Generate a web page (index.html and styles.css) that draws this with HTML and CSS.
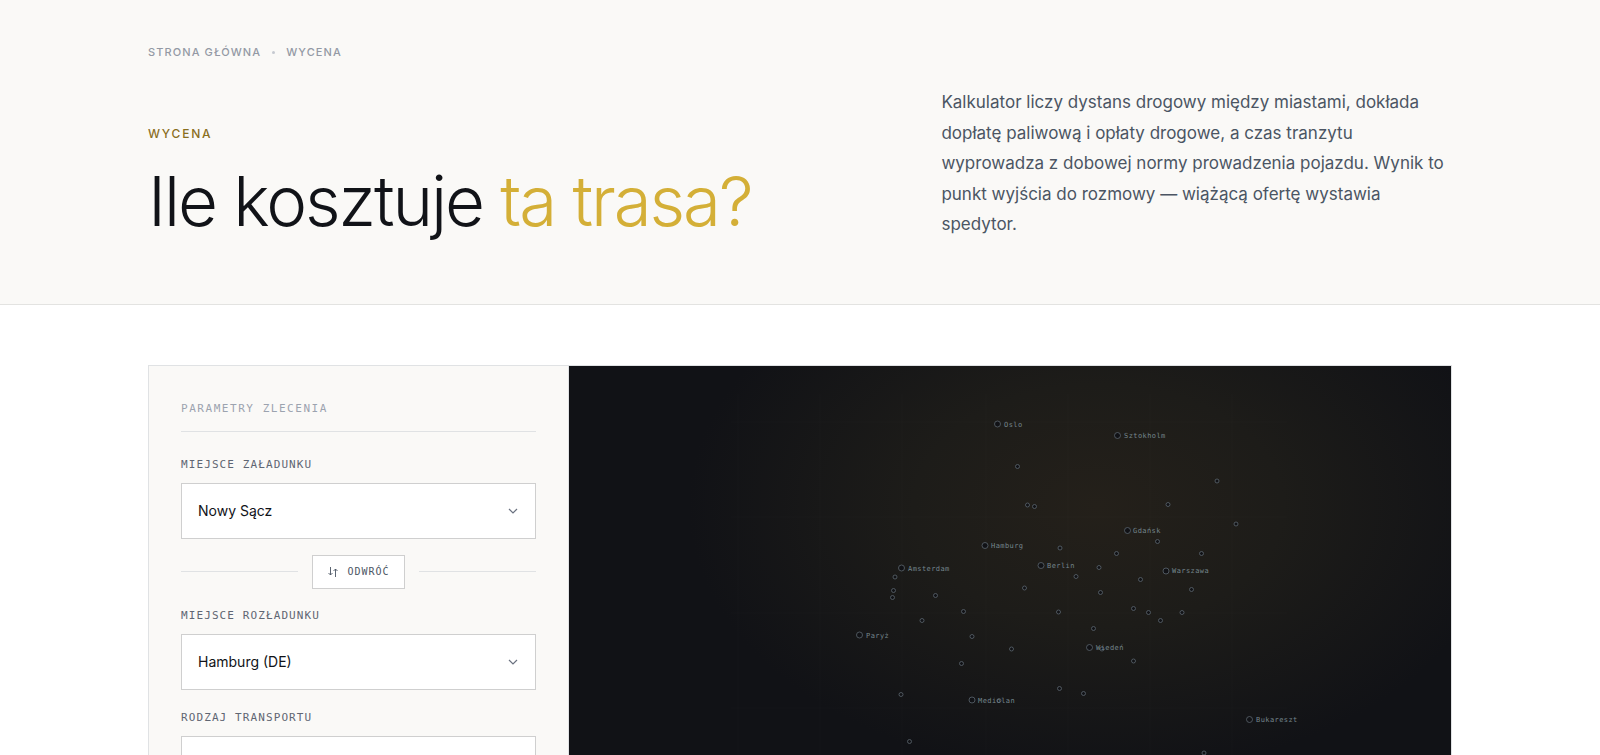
FILE: index.html
```html
<!DOCTYPE html>
<html lang="pl">

<head>
    <meta charset="UTF-8">
    <meta name="viewport" content="width=device-width, initial-scale=1">
    <title>Wycena</title>
    <link rel="stylesheet" href="styles.css">
</head>

<body>
    <header class="hero">
        <div class="container">
            <nav class="breadcrumbs">
                <a href="#">Strona główna</a>
                <span class="breadcrumbs-dot"></span>
                <a href="#">Wycena</a>
            </nav>
            <div class="hero-grid">
                <div>
                    <p class="eyebrow">Wycena</p>
                    <h1 class="hero-title">Ile kosztuje <span class="accent">ta trasa?</span></h1>
                </div>
                <p class="lead">Kalkulator liczy dystans drogowy między miastami, dokłada dopłatę paliwową i opłaty drogowe, a czas tranzytu wyprowadza z dobowej normy prowadzenia pojazdu. Wynik to punkt wyjścia do rozmowy — wiążącą ofertę wystawia spedytor.</p>
            </div>
        </div>
    </header>

    <main class="container">
        <div class="calculator">
            <form class="params">
                <h2 class="params-title">Parametry zlecenia</h2>

                <div class="field">
                    <label for="from">Miejsce załadunku</label>
                    <div class="select">
                        <select id="from">
                            <option>Nowy Sącz</option>
                        </select>
                        <svg class="chevron" viewBox="0 0 10 6"><path d="M1 1l4 4 4-4"/></svg>
                    </div>
                </div>

                <div class="swap">
                    <button type="button">
                        <svg class="swap-icon" viewBox="0 0 12 12"><path d="M3.5 1v8M1.5 7l2 2 2-2M8.500 11V3M6.500 5l2-2 2 2"/></svg>
                        Odwróć
                    </button>
                </div>

                <div class="field">
                    <label for="to">Miejsce rozładunku</label>
                    <div class="select">
                        <select id="to">
                            <option>Hamburg (DE)</option>
                        </select>
                        <svg class="chevron" viewBox="0 0 10 6"><path d="M1 1l4 4 4-4"/></svg>
                    </div>
                </div>

                <div class="field">
                    <label for="type">Rodzaj transportu</label>
                    <div class="select">
                        <select id="type"></select>
                        <svg class="chevron" viewBox="0 0 10 6"><path d="M1 1l4 4 4-4"/></svg>
                    </div>
                </div>
            </form>

            <div class="map">
                <svg viewBox="0 0 882 460">
                    <g class="map-grid">
                        <path d="M169 28V460M251 28V460M333 28V460M417 28V460M499 28V460M581 28V460M663 28V460"/>
                        <path d="M162 56H718M162 151H718M162 247H718M162 342H718"/>
                    </g>
                    <g class="towns">
                        <circle cx="448.5" cy="100.5" r="2"/>
                        <circle cx="458.5" cy="139" r="2"/>
                        <circle cx="465.5" cy="140.5" r="2"/>
                        <circle cx="491" cy="182" r="2"/>
                        <circle cx="547.5" cy="187.5" r="2"/>
                        <circle cx="530" cy="201.5" r="2"/>
                        <circle cx="507" cy="210.5" r="2"/>
                        <circle cx="326" cy="211" r="2"/>
                        <circle cx="648" cy="115" r="2"/>
                        <circle cx="599" cy="138.5" r="2"/>
                        <circle cx="667" cy="158" r="2"/>
                        <circle cx="588.5" cy="175.5" r="2"/>
                        <circle cx="632.5" cy="187.5" r="2"/>
                        <circle cx="324.5" cy="224.5" r="2"/>
                        <circle cx="323.5" cy="231.5" r="2"/>
                        <circle cx="366.5" cy="229.5" r="2"/>
                        <circle cx="394.5" cy="245.5" r="2"/>
                        <circle cx="353" cy="254.5" r="2"/>
                        <circle cx="403" cy="270.5" r="2"/>
                        <circle cx="442.5" cy="283" r="2"/>
                        <circle cx="392.5" cy="297.5" r="2"/>
                        <circle cx="455.5" cy="222" r="2"/>
                        <circle cx="531.5" cy="226.5" r="2"/>
                        <circle cx="489.5" cy="246" r="2"/>
                        <circle cx="564.5" cy="242.5" r="2"/>
                        <circle cx="524.5" cy="262.5" r="2"/>
                        <circle cx="564.5" cy="295" r="2"/>
                        <circle cx="490.5" cy="322.5" r="2"/>
                        <circle cx="514.5" cy="327.5" r="2"/>
                        <circle cx="332" cy="328.5" r="2"/>
                        <circle cx="340.5" cy="375.5" r="2"/>
                        <circle cx="571.5" cy="213.5" r="2"/>
                        <circle cx="622.5" cy="223.5" r="2"/>
                        <circle cx="579.5" cy="246.5" r="2"/>
                        <circle cx="613" cy="246.5" r="2"/>
                        <circle cx="591.5" cy="254.5" r="2"/>
                        <circle cx="635" cy="387" r="2"/>
                        <circle cx="533" cy="283" r="2"/>
                        <circle cx="430" cy="334.5" r="2"/>
                    </g>
                    <g class="cities">
                        <circle cx="428.5" cy="58" r="3"/>
                        <circle cx="548.5" cy="69.5" r="3"/>
                        <circle cx="558.5" cy="164.5" r="3"/>
                        <circle cx="416" cy="179.5" r="3"/>
                        <circle cx="472" cy="199.5" r="3"/>
                        <circle cx="332.5" cy="202" r="3"/>
                        <circle cx="597" cy="205" r="3"/>
                        <circle cx="290.5" cy="269" r="3"/>
                        <circle cx="520.5" cy="281.5" r="3"/>
                        <circle cx="403" cy="334" r="3"/>
                        <circle cx="680.5" cy="353.5" r="3"/>
                    </g>
                    <g class="city-names">
                        <text x="435" y="61">Oslo</text>
                        <text x="555" y="72">Sztokholm</text>
                        <text x="564" y="167">Gdańsk</text>
                        <text x="422" y="182">Hamburg</text>
                        <text x="478" y="202">Berlin</text>
                        <text x="339" y="205">Amsterdam</text>
                        <text x="603" y="207">Warszawa</text>
                        <text x="297" y="272">Paryż</text>
                        <text x="527" y="284">Wiedeń</text>
                        <text x="409" y="337">Mediolan</text>
                        <text x="687" y="356">Bukareszt</text>
                    </g>
                </svg>
            </div>
        </div>
    </main>
</body>

</html>
```
FILE: styles.css
```css
* {
    box-sizing: border-box;
}

body {
    margin: 0;
    font-family: Inter, "Liberation Sans", sans-serif;
    color: #111318;
    background: #ffffff;
}

h1,
h2,
p {
    margin: 0;
}

.container {
    max-width: 1400px;
    margin: 0 auto;
    padding: 0 48px;
}

.hero {
    padding: 44px 0 64px;
    background: #faf9f7;
    border-bottom: 1px solid #e3e3e1;
}

.breadcrumbs {
    display: flex;
    align-items: center;
    gap: 11px;
    margin-bottom: 27px;
    font-size: 11px;
    line-height: 16px;
    font-weight: 500;
    letter-spacing: 0.1em;
    text-transform: uppercase;
}

.breadcrumbs a {
    color: #9499a5;
    text-decoration: none;
}

.breadcrumbs-dot {
    width: 3px;
    height: 3px;
    border-radius: 50%;
    background: #c5c9d0;
}

.hero-grid {
    display: grid;
    grid-template-columns: 1fr 0.7fr;
    gap: 64px;
    align-items: end;
}

.eyebrow {
    margin-bottom: 20px;
    font-size: 12px;
    line-height: 16px;
    font-weight: 500;
    letter-spacing: 0.15em;
    text-transform: uppercase;
    color: #8a6f1e;
}

.hero-title {
    font-size: 69px;
    line-height: 78px;
    font-weight: 300;
    letter-spacing: -0.03em;
}

.accent {
    color: #d4af37;
}

.lead {
    font-size: 17px;
    line-height: 1.8;
    color: #4b5563;
}

.calculator {
    display: grid;
    grid-template-columns: 420px 1fr;
    margin-top: 60px;
    border: 1px solid #e0e2e4;
}

.params {
    padding: 32px;
    background: #faf9f7;
    border-right: 1px solid #e0e2e4;
}

.params-title {
    margin-bottom: 25px;
    padding-bottom: 11px;
    border-bottom: 1px solid #e0e2e4;
    font-family: "DejaVu Sans Mono", monospace;
    font-size: 11px;
    line-height: 22px;
    font-weight: 400;
    letter-spacing: 0.14em;
    text-transform: uppercase;
    color: #9ca3af;
}

.field {
    margin-bottom: 20px;
}

.field label {
    display: block;
    margin-bottom: 10px;
    font-family: "DejaVu Sans Mono", monospace;
    font-size: 11px;
    line-height: 16px;
    letter-spacing: 0.1em;
    text-transform: uppercase;
    color: #5f6673;
}

.select {
    position: relative;
}

.select select {
    display: block;
    width: 100%;
    height: 56px;
    padding: 0 40px 0 16px;
    border: 1px solid #cfcfcf;
    border-radius: 0;
    background: #ffffff;
    font-family: inherit;
    font-size: 14px;
    color: #111318;
    appearance: none;
}

.chevron {
    position: absolute;
    top: 25px;
    right: 18px;
    width: 10px;
    height: 6px;
    fill: none;
    stroke: #6b7280;
    stroke-width: 1.2;
    pointer-events: none;
}

.swap {
    display: flex;
    align-items: center;
    gap: 14px;
    margin: -4px 0 19px;
}

.swap::before,
.swap::after {
    content: "";
    flex: 1;
    height: 1px;
    background: #e0e2e4;
}

.swap button {
    display: flex;
    align-items: center;
    gap: 8px;
    height: 34px;
    padding: 0 14px;
    border: 1px solid #cfcfcf;
    background: #ffffff;
    font-family: "DejaVu Sans Mono", monospace;
    font-size: 10px;
    letter-spacing: 0.1em;
    text-transform: uppercase;
    color: #4b5563;
    cursor: pointer;
}

.swap-icon {
    width: 12px;
    height: 12px;
    fill: none;
    stroke: #4b5563;
    stroke-width: 0.9;
}

.map {
    background: radial-gradient(ellipse 410px 270px at 60% 140px, #24201a, #1d1c19 45%, #111216);
}

.map svg {
    display: block;
    width: 100%;
}

.map-grid {
    fill: none;
    stroke: #ffffff;
    stroke-opacity: 0.018;
}

.towns circle,
.cities circle {
    fill: #111216;
    stroke: #5c666e;
    stroke-width: 0.8;
}

.city-names {
    font-family: "DejaVu Sans Mono", monospace;
    font-size: 7px;
    letter-spacing: 0.06em;
    fill: #75868d;
}
```
